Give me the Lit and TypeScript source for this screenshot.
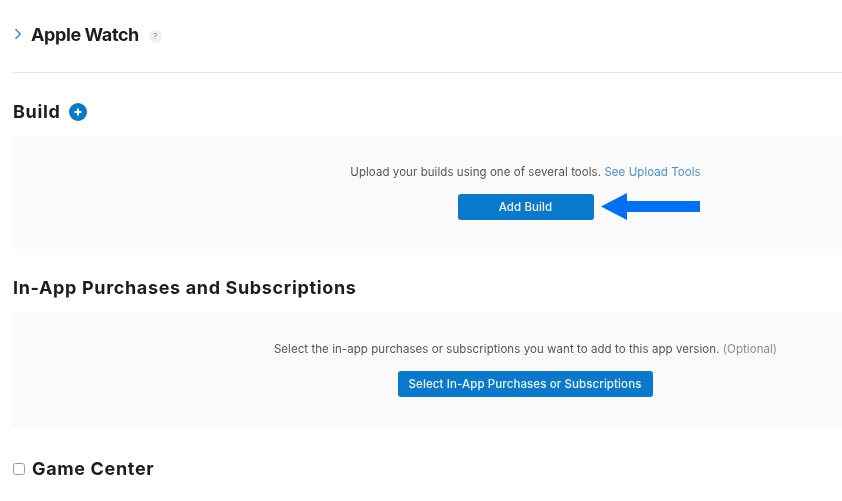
import { LitElement, html, css } from "lit";
import { customElement } from "lit/decorators.js";

@customElement("app-root")
export class AppRoot extends LitElement {
  static styles = css`
    :host { display: block; width: 842px; height: 501px; overflow: hidden; background: #fff; font-family: Inter, "Noto Sans", sans-serif; color: #1d1d1f; }
    .page { display: flex; flex-direction: column; padding: 0 0 0 12px; filter: blur(0.35px); }
    .watch { display: flex; align-items: center; height: 73px; box-sizing: border-box; padding: 0 0 2px 2px; border-bottom: 1px solid #e8e8e8; width: 831px; }
    .watch .chev { width: 8px; height: 12px; margin-right: 9px; margin-top: -2px; }
    .title { font-size: 18px; font-weight: 700; line-height: 22px; letter-spacing: 0.65px; color: #1d1d1f; }
    .watch .title { letter-spacing: -0.4px; }
    .q { width: 13px; height: 13px; border-radius: 50%; background: #f0f0f0; color: #8a8a8a; font-size: 8px; line-height: 13px; text-align: center; margin-left: 10px; margin-top: 2px; }
    .head { display: flex; align-items: center; height: 22px; }
    .plus { margin-left: 9px; }
    .h1 { margin-top: 28px; }
    .h2 { margin-top: 28px; }
    .panel { width: 831px; background: #fafafa; display: flex; flex-direction: column; align-items: center; box-sizing: border-box; padding-left: 196px; }
    .p1 { height: 113px; margin-top: 13px; }
    .p2 { height: 114px; margin-top: 14px; }
    .msg { font-size: 11.5px; line-height: 16px; color: #555; margin-top: 28px; letter-spacing: 0.06px; white-space: nowrap; }
    .msg a { color: #4a8fd0; }
    .msg span { color: #8c8c8c; }
    .btn { height: 26px; box-sizing: border-box; background: #0a78cd; color: #f2f8fd; border-radius: 3px; font-size: 11.5px; font-weight: 500; line-height: 26px; text-align: center; letter-spacing: 0.1px; margin-top: 14px; }
    .b1 { width: 136px; }
    .b2 { width: 255px; margin-right: 1px; }
    .arrow { position: absolute; left: 601px; top: 193px; }
    .gc { display: flex; align-items: center; margin-top: 31px; }
    .box { width: 12px; height: 12px; border: 1px solid #999; border-radius: 2.5px; margin: 0 7px 0 1px; background: #fff; box-sizing: border-box; }
    .hw { margin-left: 1px; }
  `;
  render() {
    return html`
      <div class="page">
        <div class="watch">
          <svg class="chev" viewBox="0 0 8 12"><path d="M1.5 1.2 6.2 6 1.5 10.8" fill="none" stroke="#3f82c0" stroke-width="1.4"/></svg>
          <span class="title">Apple Watch</span>
          <span class="q">?</span>
        </div>
        <div class="head h1">
          <span class="title hw">Build</span>
          <svg class="plus" width="18" height="18" viewBox="0 0 18 18"><circle cx="9" cy="9" r="9" fill="#0a78cd"/><path d="M9 5.5v7M5.5 9h7" stroke="#fff" stroke-width="2"/></svg>
        </div>
        <div class="panel p1">
          <div class="msg">Upload your builds using one of several tools. <a>See Upload Tools</a></div>
          <div class="btn b1">Add Build</div>
        </div>
        <div class="head h2"><span class="title hw">In-App Purchases and Subscriptions</span></div>
        <div class="panel p2">
          <div class="msg">Select the in-app purchases or subscriptions you want to add to this app version. <span>(Optional)</span></div>
          <div class="btn b2">Select In-App Purchases or Subscriptions</div>
        </div>
        <div class="gc"><div class="box"></div><span class="title">Game Center</span></div>
      </div>
      <svg class="arrow" width="100" height="28" viewBox="0 0 100 28"><path d="M0 13.5 26 0V8H99V19H26V27Z" fill="#0070f5"/></svg>
    `;
  }
}
